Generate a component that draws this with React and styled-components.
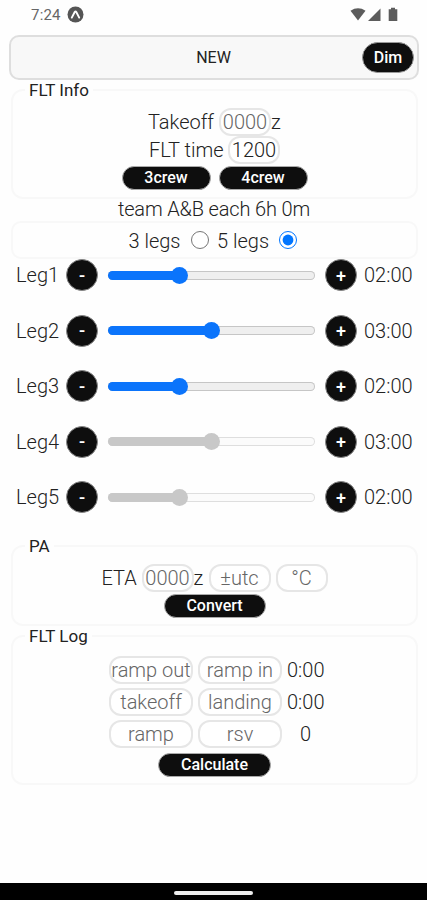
import { useState } from "react";
import styled, { createGlobalStyle } from "styled-components";

const initialLegs = [2, 3, 2, 3, 2];
const maxHours = 6;

function formatHours(hours) {
  return `${String(hours).padStart(2, "0")}:00`;
}

function StatusBar() {
  return (
    <Status>
      <Clock>7:24</Clock>
      <svg width="17" height="17" viewBox="0 0 17 17">
        <circle cx="8.5" cy="8.5" r="8" fill="#555" />
        <path
          d="M4.8 11.6 L7.7 6 Q8.5 4.8 9.3 6 L12.2 11.6"
          fill="none"
          stroke="#fff"
          strokeWidth="1.9"
          strokeLinecap="round"
        />
      </svg>
      <StatusIcons>
        <svg width="48" height="15" viewBox="0 0 48 15">
          <path d="M0.5 3.7 Q8 -1.1 15.5 3.7 L8 13.5 Z" fill="#5c5c5c" />
          <path d="M30.5 1.5 V14 H18 Z" fill="#5c5c5c" />
          <path d="M41 0.8 H45 V2.3 H47.3 V14 H38.7 V2.3 H41 Z" fill="#5c5c5c" />
        </svg>
      </StatusIcons>
    </Status>
  );
}

function LegRow({ name, hours, disabled, onChange }) {
  const ratio = hours / maxHours;

  return (
    <Leg>
      <LegName>{name}</LegName>
      <RoundButton onClick={() => onChange(Math.max(0, hours - 1))}>-</RoundButton>
      <Track $disabled={disabled}>
        <Fill $disabled={disabled} style={{ width: `${ratio * 100}%` }} />
        <Thumb
          $disabled={disabled}
          style={{ left: `calc((100% - 17px) * ${ratio})` }}
        />
      </Track>
      <RoundButton onClick={() => onChange(Math.min(maxHours, hours + 1))}>
        +
      </RoundButton>
      <LegTime>{formatHours(hours)}</LegTime>
    </Leg>
  );
}

export default function App() {
  const [legs, setLegs] = useState(initialLegs);
  const [legCount, setLegCount] = useState(5);

  const updateLeg = (index, hours) => {
    setLegs(legs.map((leg, i) => (i === index ? hours : leg)));
  };

  return (
    <Screen>
      <GlobalStyle />
      <StatusBar />
      <Header>
        <Title>NEW</Title>
        <DimButton>Dim</DimButton>
      </Header>

      <Panel $height={118}>
        <Legend>FLT Info</Legend>
        <Line $top={9} $height={28}>
          <Label $width={66}>Takeoff</Label>
          <Field $width={52} placeholder="0000" />
          <Unit>z</Unit>
        </Line>
        <Line $top={0} $height={28}>
          <Label $width={74}>FLT time</Label>
          <Field $width={52} defaultValue="1200" />
        </Line>
        <Line $top={2} $height={24} $gap={8}>
          <PillButton $width={89}>3crew</PillButton>
          <PillButton $width={89}>4crew</PillButton>
        </Line>
      </Panel>

      <Team>team A&amp;B each 6h 0m</Team>

      <LegPicker>
        <span>3 legs</span>
        <Radio
          type="radio"
          name="legs"
          checked={legCount === 3}
          onChange={() => setLegCount(3)}
        />
        <span>5 legs</span>
        <Radio
          type="radio"
          name="legs"
          checked={legCount === 5}
          onChange={() => setLegCount(5)}
        />
      </LegPicker>

      <Legs>
        {legs.map((hours, i) => (
          <LegRow
            key={i}
            name={`Leg${i + 1}`}
            hours={hours}
            disabled={i > 2}
            onChange={(value) => updateLeg(i, value)}
          />
        ))}
      </Legs>

      <Panel $height={89}>
        <Legend>PA</Legend>
        <Line $top={9} $height={28}>
          <Label $width={35}>ETA</Label>
          <Field $width={52} placeholder="0000" />
          <Unit $width={15}>z</Unit>
          <Field $width={62} placeholder="±utc" />
          <Spacer />
          <Field $width={52} placeholder="°C" />
        </Line>
        <Line $top={2} $height={24}>
          <PillButton $width={102}>Convert</PillButton>
        </Line>
      </Panel>

      <Panel $height={158}>
        <Legend>FLT Log</Legend>
        <LogGrid>
          <Field $width={84} placeholder="ramp out" />
          <Field $width={84} placeholder="ramp in" />
          <Total>0:00</Total>
          <Field $width={84} placeholder="takeoff" />
          <Field $width={84} placeholder="landing" />
          <Total>0:00</Total>
          <Field $width={84} placeholder="ramp" />
          <Field $width={84} placeholder="rsv" />
          <Total>0</Total>
        </LogGrid>
        <Line $top={5} $height={24}>
          <PillButton $width={113}>Calculate</PillButton>
        </Line>
      </Panel>

      <NavBar>
        <NavHandle />
      </NavBar>
    </Screen>
  );
}

const GlobalStyle = createGlobalStyle`
  * {
    box-sizing: border-box;
  }

  body {
    margin: 0;
    background: #fefefe;
  }

  button,
  input {
    font-family: inherit;
  }
`;

const Screen = styled.div`
  display: flex;
  flex-direction: column;
  width: 427px;
  height: 900px;
  overflow: hidden;
  background: #fefefe;
  color: #222;
  font-family: Roboto, sans-serif;
  font-size: 20px;
  font-weight: 300;
`;

const Status = styled.div`
  display: flex;
  align-items: center;
  height: 35px;
  padding: 0 29px 6px 31px;
  flex-shrink: 0;
`;

const Clock = styled.span`
  width: 36px;
  color: #666;
  font-size: 15px;
  font-weight: 400;
  letter-spacing: 0.2px;
`;

const StatusIcons = styled.div`
  display: flex;
  margin-left: auto;
`;

const Header = styled.header`
  display: flex;
  align-items: center;
  justify-content: flex-end;
  height: 45px;
  margin: 0 8px 0 9px;
  padding-right: 3px;
  border: 2px solid #dedede;
  border-radius: 10px;
  background: #f8f8f8;
  flex-shrink: 0;
`;

const Title = styled.div`
  flex: 1;
  padding-left: 54px;
  font-size: 16px;
  font-weight: 400;
  text-align: center;
`;

const DimButton = styled.button`
  width: 52px;
  height: 31px;
  padding: 0;
  border: 1px solid #999;
  border-radius: 16px;
  background: #0e0e0e;
  color: #fff;
  font-size: 16px;
  font-weight: 500;
`;

const Panel = styled.fieldset`
  height: ${(props) => props.$height}px;
  margin: 1px 9px 0 11px;
  padding: 0;
  border: 2px solid #f8f8f8;
  border-radius: 12px;
  flex-shrink: 0;
`;

const Legend = styled.legend`
  height: 18px;
  margin-left: 12px;
  padding: 0 4px;
  font-size: 17px;
  font-weight: 400;
  line-height: 18px;
`;

const Line = styled.div`
  display: flex;
  align-items: center;
  justify-content: center;
  gap: ${(props) => props.$gap || 0}px;
  height: ${(props) => props.$height}px;
  margin-top: ${(props) => props.$top}px;
`;

const Label = styled.label`
  width: ${(props) => props.$width}px;
  margin-right: 5px;
  white-space: nowrap;
`;

const Field = styled.input`
  width: ${(props) => props.$width}px;
  height: 28px;
  padding: 0;
  border: 2px solid #e6e6e6;
  border-radius: 12px;
  background: #fff;
  color: #222;
  font-size: 20px;
  font-weight: 300;
  text-align: center;

  &::placeholder {
    color: #666;
  }
`;

const Unit = styled.span`
  width: ${(props) => props.$width || 10}px;
`;

const Spacer = styled.span`
  width: 5px;
`;

const PillButton = styled.button`
  width: ${(props) => props.$width}px;
  height: 24px;
  padding: 0;
  border: 1px solid #aaa;
  border-radius: 12px;
  background: #0e0e0e;
  color: #fff;
  font-size: 16px;
  font-weight: 500;
  line-height: 20px;
`;

const Team = styled.div`
  height: 22px;
  padding-left: 1px;
  line-height: 21px;
  letter-spacing: -0.15px;
  text-align: center;
  flex-shrink: 0;
`;

const LegPicker = styled.div`
  display: flex;
  align-items: center;
  justify-content: center;
  height: 38px;
  margin: 0 9px 0 11px;
  padding: 2px 0 0 5px;
  border: 2px solid #f8f8f8;
  border-radius: 10px;
  flex-shrink: 0;
`;

const Radio = styled.input`
  width: 18px;
  height: 18px;
  margin: 0 8.5px 3px 10px;
`;

const Legs = styled.div`
  display: flex;
  flex-direction: column;
  gap: 23.5px;
  height: 277px;
  flex-shrink: 0;
`;

const Leg = styled.div`
  display: flex;
  align-items: center;
  height: 32px;
  padding-left: 16px;
`;

const LegName = styled.span`
  width: 50px;
`;

const RoundButton = styled.button`
  width: 32px;
  height: 32px;
  padding: 0;
  border: 1px solid #888;
  border-radius: 50%;
  background: #0e0e0e;
  color: #fff;
  font-size: 18px;
  font-weight: 500;
`;

const Track = styled.div`
  position: relative;
  width: 207px;
  height: 9px;
  margin: 0 10px;
  border-radius: 5px;
  background: ${(props) => (props.$disabled ? "#fbfbfb" : "#efefef")};
  box-shadow: inset 0 0 0 1px
    ${(props) => (props.$disabled ? "#dedede" : "#c6c6c6")};
`;

const Fill = styled.div`
  height: 9px;
  border-radius: 5px 0 0 5px;
  background: ${(props) => (props.$disabled ? "#c8c8c8" : "#0b74fb")};
`;

const Thumb = styled.div`
  position: absolute;
  top: -4px;
  width: 17px;
  height: 17px;
  border-radius: 50%;
  background: ${(props) => (props.$disabled ? "#c8c8c8" : "#0b74fb")};
`;

const LegTime = styled.span`
  margin-left: 7px;
`;

const LogGrid = styled.div`
  display: grid;
  grid-template-columns: 84px 84px 37px;
  gap: 4px 5px;
  align-items: center;
  justify-content: center;
  margin-top: 11px;
  padding-left: 4px;
`;

const Total = styled.span`
  text-align: center;
`;

const NavBar = styled.div`
  display: flex;
  align-items: center;
  justify-content: center;
  height: 17px;
  margin-top: auto;
  padding-top: 2px;
  background: #000;
  flex-shrink: 0;
`;

const NavHandle = styled.div`
  width: 79px;
  height: 4px;
  border-radius: 2px;
  background: #eee;
`;
